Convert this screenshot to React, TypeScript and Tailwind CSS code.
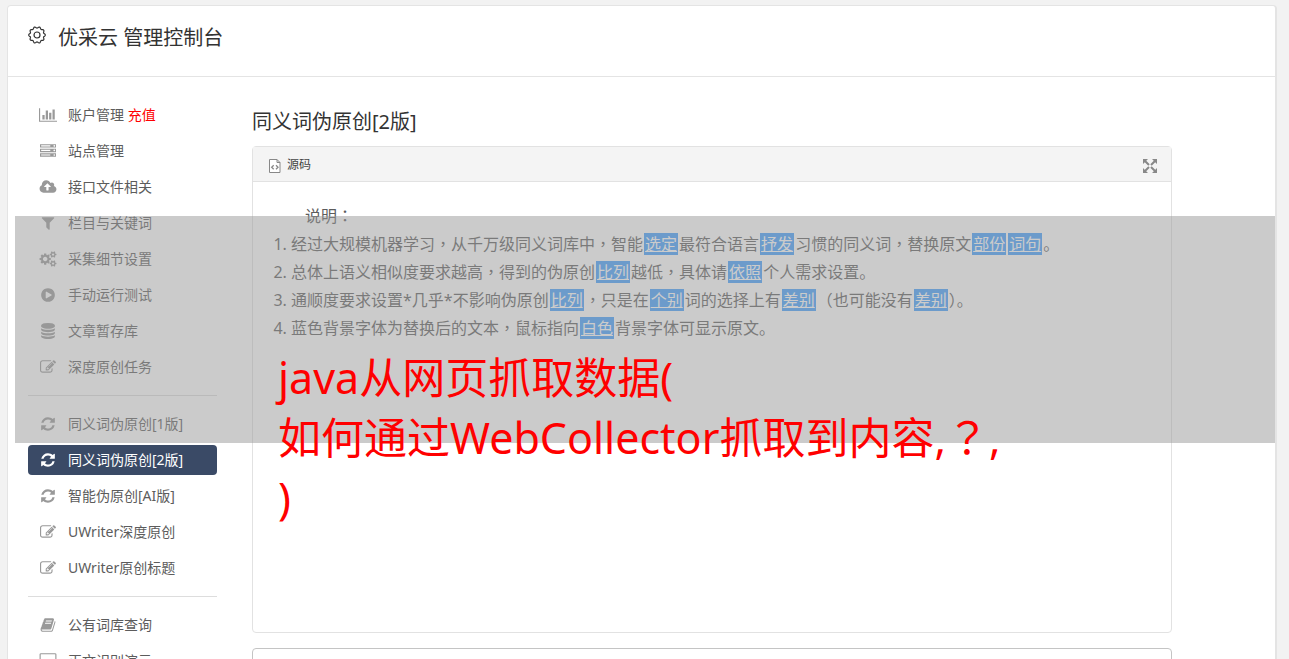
import type { ReactNode } from "react";

type IconName =
  | "chart"
  | "server"
  | "upload"
  | "filter"
  | "cogs"
  | "play"
  | "database"
  | "edit"
  | "refresh"
  | "book"
  | "desktop";

type MenuItem = {
  label: string;
  icon: IconName;
  note?: string;
  active?: boolean;
};

const ICONS: Record<IconName, { box: string; wide?: boolean; d: string }> = {
  chart: {
    box: "0 0 2048 1792",
    wide: true,
    d: "M640 896v512h-256v-512h256zm384-512v1024h-256v-1024h256zm1024 1152v128h-2048v-1536h128v1408h1920zm-640-896v768h-256v-768h256zm384-384v1152h-256v-1152h256z",
  },
  server: {
    box: "0 0 1792 1792",
    d: "M128 1408h1024v-128h-1024v128zm0-512h1024v-128h-1024v128zm1568 448q0-40-28-68t-68-28-68 28-28 68 28 68 68 28 68-28 28-68zm-1568-960h1024v-128h-1024v128zm1568 448q0-40-28-68t-68-28-68 28-28 68 28 68 68 28 68-28 28-68zm0-512q0-40-28-68t-68-28-68 28-28 68 28 68 68 28 68-28 28-68zm96 832v384h-1792v-384h1792zm0-512v384h-1792v-384h1792zm0-512v384h-1792v-384h1792z",
  },
  upload: {
    box: "-64 0 2048 1792",
    wide: true,
    d: "M1280 864q0-14-9-23l-352-352q-9-9-23-9t-23 9l-351 351q-10 12-10 24 0 14 9 23t23 9h224v352q0 13 9.5 22.5t22.5 9.5h192q13 0 22.5-9.5t9.5-22.5v-352h224q13 0 22.5-9.5t9.5-22.5zm640 288q0 159-112.5 271.5t-271.5 112.5h-1088q-185 0-316.5-131.5t-131.5-316.5q0-130 70-240t188-165q-2-30-2-43 0-212 150-362t362-150q156 0 285.5 87t188.5 231q71-62 166-62 106 0 181 75t75 181q0 76-41 138 130 31 213.5 135.5t83.5 238.5z",
  },
  filter: {
    box: "0 0 1792 1792",
    d: "M1595 295q17 41-14 70l-493 493v742q0 42-39 59-13 5-25 5-27 0-45-19l-256-256q-19-19-19-45v-486l-493-493q-31-29-14-70 17-39 59-39h1280q42 0 59 39z",
  },
  cogs: {
    box: "-64 0 2048 1792",
    wide: true,
    d: "M896 896q0-106-75-181t-181-75-181 75-75 181 75 181 181 75 181-75 75-181zm768 512q0-52-38-90t-90-38-90 38-38 90q0 53 37.5 90.5t90.5 37.5 90.5-37.5 37.5-90.5zm0-1024q0-52-38-90t-90-38-90 38-38 90q0 53 37.5 90.5t90.5 37.5 90.5-37.5 37.5-90.5zm-384 421v185q0 10-7 19.5t-16 10.5l-155 24q-11 35-32 76 34 48 90 115 7 11 7 20 0 12-7 19-23 30-82.5 89.5t-78.5 59.5q-11 0-21-7l-115-90q-37 19-77 31-11 108-23 155-7 24-30 24h-186q-11 0-20-7.5t-10-17.5l-23-153q-34-10-75-31l-118 89q-7 7-20 7-11 0-21-8-144-133-144-160 0-9 7-19 10-14 41-53t47-61q-23-44-35-82l-152-24q-10-1-17-9.5t-7-19.5v-185q0-10 7-19.5t16-10.5l155-24q11-35 32-76-34-48-90-115-7-11-7-20 0-12 7-20 22-30 82-89t79-59q11 0 21 7l115 90q34-18 77-32 11-108 23-154 7-24 30-24h186q11 0 20 7.5t10 17.5l23 153q34 10 75 31l118-89q8-7 20-7 11 0 21 8 144 133 144 160 0 8-7 19-12 16-42 54t-45 60q23 48 34 82l152 23q10 2 17 10.5t7 19.5zm640 533v140q0 16-149 31-12 27-30 52 51 113 51 138 0 4-4 7-122 71-124 71-8 0-46-47t-52-68q-20 2-30 2t-30-2q-14 21-52 68t-46 47q-2 0-124-71-4-3-4-7 0-25 51-138-18-25-30-52-149-15-149-31v-140q0-16 149-31 13-29 30-52-51-113-51-138 0-4 4-7 4-2 35-20t59-34 30-16q8 0 46 46.5t52 67.5q20-2 30-2t30 2q51-71 92-112l6-2q4 0 124 70 4 3 4 7 0 25-51 138 17 23 30 52 149 15 149 31zm0-1024v140q0 16-149 31-12 27-30 52 51 113 51 138 0 4-4 7-122 71-124 71-8 0-46-47t-52-68q-20 2-30 2t-30-2q-14 21-52 68t-46 47q-2 0-124-71-4-3-4-7 0-25 51-138-18-25-30-52-149-15-149-31v-140q0-16 149-31 13-29 30-52-51-113-51-138 0-4 4-7 4-2 35-20t59-34 30-16q8 0 46 46.5t52 67.5q20-2 30-2t30 2q51-71 92-112l6-2q4 0 124 70 4 3 4 7 0 25-51 138 17 23 30 52 149 15 149 31z",
  },
  play: {
    box: "0 0 1792 1792",
    d: "M896 128q209 0 385.5 103t279.5 279.5 103 385.5-103 385.5-279.5 279.5-385.5 103-385.5-103-279.5-279.5-103-385.5 103-385.5 279.5-279.5 385.5-103zm384 823q32-18 32-55t-32-55l-544-320q-31-19-64-1-32 19-32 56v640q0 37 32 56 16 8 32 8 17 0 32-9z",
  },
  database: {
    box: "0 0 1792 1792",
    d: "M896 768q237 0 443-43t325-127v170q0 69-103 128t-280 93.5-385 34.5-385-34.5-280-93.5-103-128v-170q119 84 325 127t443 43zm0 768q237 0 443-43t325-127v170q0 69-103 128t-280 93.5-385 34.5-385-34.5-280-93.5-103-128v-170q119 84 325 127t443 43zm0-384q237 0 443-43t325-127v170q0 69-103 128t-280 93.5-385 34.5-385-34.5-280-93.5-103-128v-170q119 84 325 127t443 43zm0-1152q208 0 385 34.5t280 93.5 103 128v128q0 69-103 128t-280 93.5-385 34.5-385-34.5-280-93.5-103-128v-128q0-69 103-128t280-93.5 385-34.5z",
  },
  edit: {
    box: "0 0 1792 1792",
    d: "M888 1184l116-116-152-152-116 116v56h96v96h56zm440-720q-16-16-33 1l-350 350q-17 17-1 33t33-1l350-350q17-17 1-33zm80 594v190q0 119-84.5 203.5t-203.5 84.5h-832q-119 0-203.5-84.5t-84.5-203.5v-832q0-119 84.5-203.5t203.5-84.5h832q63 0 117 25 15 7 18 23 3 17-9 29l-49 49q-14 14-32 8-23-6-45-6h-832q-66 0-113 47t-47 113v832q0 66 47 113t113 47h832q66 0 113-47t47-113v-126q0-13 9-22l64-64q15-15 35-7t20 29zm-96-738l288 288-672 672h-288v-288zm444 132l-92 92-288-288 92-92q28-28 68-28t68 28l152 152q28 28 28 68t-28 68z",
  },
  refresh: {
    box: "0 0 1792 1792",
    d: "M1639 1056q0 5-1 7-64 268-268 434.5t-478 166.5q-146 0-282.5-55t-243.5-157l-129 129q-19 19-45 19t-45-19-19-45v-448q0-26 19-45t45-19h448q26 0 45 19t19 45-19 45l-137 137q71 66 161 102t187 36q134 0 250-65t186-179q11-17 53-117 8-23 30-23h192q13 0 22.5 9.5t9.5 22.5zm25-800v448q0 26-19 45t-45 19h-448q-26 0-45-19t-19-45 19-45l138-138q-148-137-349-137-134 0-250 65t-186 179q-11 17-53 117-8 23-30 23h-199q-13 0-22.5-9.5t-9.5-22.5v-7q65-268 270-434.5t480-166.5q146 0 284 55.5t245 156.5l130-129q19-19 45-19t45 19 19 45z",
  },
  book: {
    box: "0 0 1792 1792",
    d: "M1703 478q40 57 18 129l-275 906q-19 64-76.5 107.5t-122.5 43.5h-923q-77 0-148.5-53.5t-99.5-131.5q-24-67-2-127 0-4 3-27t4-37q1-8-3-21.5t-3-19.5q2-11 8-21t16.5-23.5 16.5-23.5q23-38 45-91.5t30-91.5q3-10 .5-30t-.5-28q3-11 17-28t17-23q21-36 42-92t25-90q1-9-2.5-32t.5-28q4-13 22-30.5t22-22.5q19-26 42.5-84.5t27.5-96.5q1-8-3-25.5t-2-26.5q2-8 9-18t18-23 17-21q8-12 16.5-30.5t15-35 16-36 19.5-32 26.5-23.5 36-11.5 47.5 5.5l-1 3q38-9 51-9h761q74 0 114 56t18 130l-274 906q-36 119-71.5 153.5t-128.5 34.5h-869q-27 0-38 15-11 16-1 43 24 70 144 70h923q29 0 56-15.5t35-41.5l300-987q7-22 5-57 38 15 59 43zm-1064 2q-4 13 2 22.5t20 9.5h608q13 0 25.5-9.5t16.5-22.5l21-64q4-13-2-22.5t-20-9.5h-608q-13 0-25.5 9.5t-16.5 22.5zm-83 256q-4 13 2 22.5t20 9.5h608q13 0 25.5-9.5t16.5-22.5l21-64q4-13-2-22.5t-20-9.5h-608q-13 0-25.5 9.5t-16.5 22.5z",
  },
  desktop: {
    box: "-128 0 2048 1792",
    wide: true,
    d: "M1728 992v-832q0-13-9.5-22.5t-22.5-9.5h-1600q-13 0-22.5 9.5t-9.5 22.5v832q0 13 9.5 22.5t22.5 9.5h1600q13 0 22.5-9.5t9.5-22.5zm128-832v1088q0 66-47 113t-113 47h-544q0 37 16 77.5t32 71 16 43.5q0 26-19 45t-45 19h-512q-26 0-45-19t-19-45q0-14 16-44t32-70 16-78h-544q-66 0-113-47t-47-113v-1088q0-66 47-113t113-47h1600q66 0 113 47t47 113z",
  },
};

const MENU: MenuItem[][] = [
  [
    { label: "账户管理", icon: "chart", note: "充值" },
    { label: "站点管理", icon: "server" },
    { label: "接口文件相关", icon: "upload" },
    { label: "栏目与关键词", icon: "filter" },
    { label: "采集细节设置", icon: "cogs" },
    { label: "手动运行测试", icon: "play" },
    { label: "文章暂存库", icon: "database" },
    { label: "深度原创任务", icon: "edit" },
  ],
  [
    { label: "同义词伪原创[1版]", icon: "refresh" },
    { label: "同义词伪原创[2版]", icon: "refresh", active: true },
    { label: "智能伪原创[AI版]", icon: "refresh" },
    { label: "UWriter深度原创", icon: "edit" },
    { label: "UWriter原创标题", icon: "edit" },
  ],
  [
    { label: "公有词库查询", icon: "book" },
    { label: "正文识别演示", icon: "desktop" },
  ],
];

// scalloped outline with ten soft teeth around (9, 9)
const GEAR_PATH =
  Array.from({ length: 120 }, (_, i) => {
    const angle = (i / 120) * Math.PI * 2;
    const radius = 7.6 + 0.7 * Math.cos(angle * 10);
    return `${i === 0 ? "M" : "L"}${(9 + radius * Math.cos(angle)).toFixed(2)} ${(9 + radius * Math.sin(angle)).toFixed(2)}`;
  }).join("") + "Z";

function MenuIcon({ name }: { name: IconName }) {
  const icon = ICONS[name];
  return (
    <svg viewBox={icon.box} className={icon.wide ? "h-4 w-[18px]" : "size-4"} fill="currentColor" aria-hidden="true">
      <path d={icon.d} />
    </svg>
  );
}

function Word({ children }: { children: ReactNode }) {
  return (
    <a href="#" className="mx-px bg-[#409eff] px-px text-white underline">
      {children}
    </a>
  );
}

// full-width punctuation that sits in the middle of its cell
function Mark({ children }: { children: ReactNode }) {
  return <span className="font-['Noto_Sans_CJK_TC',sans-serif] leading-none">{children}</span>;
}

function Sidebar() {
  return (
    <nav className="w-[189px] shrink-0">
      {MENU.map((group, index) => (
        <ul
          key={index}
          className={["flex flex-col gap-1.5", index > 0 ? "mt-[13px] border-t border-[#ddd] pt-[13px]" : ""].join(" ")}
        >
          {group.map((item) => (
            <li key={item.label}>
              <a
                href="#"
                className={[
                  "flex h-[30px] items-center rounded-sm text-sm",
                  item.active ? "bg-[#3a4a66] text-white" : "text-[#5c5c5c]",
                ].join(" ")}
              >
                <span className={["flex w-10 shrink-0 justify-center", item.active ? "text-white" : "text-[#999]"].join(" ")}>
                  <MenuIcon name={item.icon} />
                </span>
                <span>
                  {item.label}
                  {item.note && <span className="text-[#f00]"> {item.note}</span>}
                </span>
              </a>
            </li>
          ))}
        </ul>
      ))}
    </nav>
  );
}

function Editor() {
  return (
    <section className="flex h-[487px] flex-col rounded-sm border border-[#e2e2e2]">
      <div className="flex h-[35px] shrink-0 items-center justify-between border-b border-[#e2e2e2] bg-[#f4f4f4] pr-3.5 pl-4">
        <button type="button" className="flex items-center gap-1.5 pt-0.5 text-xs text-[#444]">
          <svg viewBox="0 0 12 14" className="mt-0.5 h-3.5 w-3" fill="none" stroke="#888" aria-hidden="true">
            <path d="M.5.5h7.500l3 3v10H.5zM8 .5v3h3" fill="#fff" />
            <path d="M4.700 6.300 2.700 8.300l2 2M7 6.300l2 2-2 2" strokeWidth="1.300" />
          </svg>
          源码
        </button>
        <button type="button" aria-label="全屏" className="mt-1">
          <svg viewBox="0 0 14 14" className="size-3.5" fill="#888" stroke="#888" aria-hidden="true">
            <path d="M0 0h5L0 5zM14 0v5L9 0zM0 14V9l5 5zM14 14H9l5-5z" stroke="none" />
            <path d="M2 2l4 4M12 2 8 6M2 12l4-4M12 12 8 8" strokeWidth="2" />
          </svg>
        </button>
      </div>
      <div className="p-5 pb-0 text-base leading-7 text-[#5c5c5c]">
        <p className="indent-8">
          说明<Mark>：</Mark>
        </p>
        <ol className="list-decimal pl-[18px]">
          <li>
            经过大规模机器学习<Mark>，</Mark>从千万级同义词库中<Mark>，</Mark>智能<Word>选定</Word>最符合语言
            <Word>抒发</Word>习惯的同义词<Mark>，</Mark>替换原文<Word>部份</Word><Word>词句</Word>。
          </li>
          <li>
            总体上语义相似度要求越高<Mark>，</Mark>得到的伪原创<Word>比列</Word>越低<Mark>，</Mark>具体请
            <Word>依照</Word>个人需求设置。
          </li>
          <li>
            通顺度要求设置*几乎*不影响伪原创<Word>比列</Word><Mark>，</Mark>只是在<Word>个别</Word>词的选择上有
            <Word>差别</Word><Mark>（</Mark>也可能没有<Word>差别</Word><Mark>）</Mark>。
          </li>
          <li>
            蓝色背景字体为替换后的文本<Mark>，</Mark>鼠标指向<Word>白色</Word>背景字体可显示原文。
          </li>
        </ol>
      </div>
    </section>
  );
}

export default function App() {
  return (
    <div className="relative h-screen overflow-hidden bg-[#f2f2f2] pt-[5px] pr-3 pl-[7px] font-['Noto_Sans','Noto_Sans_CJK_SC',sans-serif]">
      <div className="min-h-full rounded-t-sm border border-r-2 border-[#e4e4e4] bg-white">
        <header className="flex h-[71px] items-start gap-3 border-b border-[#e4e4e4] px-5 pt-4">
          <svg viewBox="0 0 18 18" className="mt-1 size-[18px]" fill="none" stroke="#333" strokeWidth="1.200" strokeLinejoin="round" aria-hidden="true">
            <path d={GEAR_PATH} />
            <circle cx="9" cy="9" r="3" />
          </svg>
          <h1 className="text-xl leading-8 text-[#333]">优采云 管理控制台</h1>
        </header>
        <div className="flex gap-[35px] pt-[23px] pr-[103px] pl-5">
          <Sidebar />
          <main className="min-w-0 flex-1 pt-1">
            <h2 className="mb-2 pt-0.5 text-xl leading-8 text-[#333]">同义词伪原创[2版]</h2>
            <Editor />
            <textarea aria-label="原文" className="mt-[15px] block h-40 w-full resize-none rounded-sm border border-[#c4c4c4] p-3" />
          </main>
        </div>
      </div>
      <div className="absolute top-[216px] right-3.5 left-[15px] h-[227px] bg-[#979797]/50">
        <p className="pt-[132px] pl-[263px] text-[43px] leading-[60px] whitespace-nowrap text-[#f00]">
          java从网页抓取数据(
          <br />
          如何通过WebCollector抓取到内容,<Mark>？</Mark>,
          <br />)
        </p>
      </div>
    </div>
  );
}
